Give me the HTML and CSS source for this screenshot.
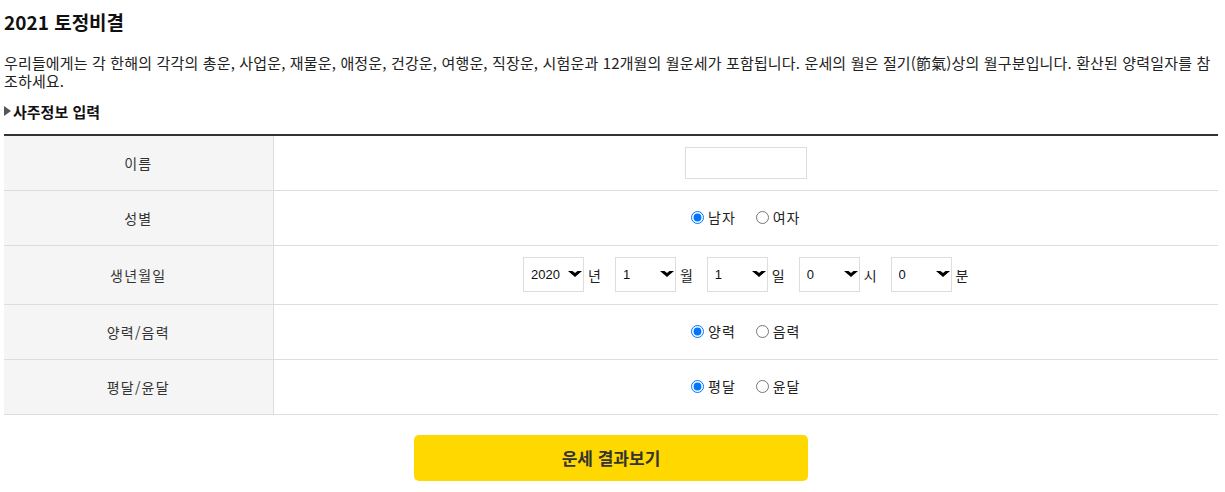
FILE: index.html
```html
<!DOCTYPE html>
<html lang="ko">
<head>
<meta charset="utf-8">
<title>2021 토정비결</title>
<link rel="stylesheet" href="styles.css">
</head>
<body>
<div class="page">
  <h1 class="title">2021 토정비결</h1>
  <p class="desc">우리들에게는 각 한해의 각각의 총운, 사업운, 재물운, 애정운, 건강운, 여행운, 직장운, 시험운과 12개월의 월운세가 포함됩니다. 운세의 월은 절기(節氣)상의 월구분입니다. 환산된 양력일자를 참조하세요.</p>
  <h2 class="sub"><span class="tri"></span>사주정보 입력</h2>
  <table class="form">
    <tr>
      <th>이름</th>
      <td><input type="text" class="name"></td>
    </tr>
    <tr>
      <th>성별</th>
      <td>
        <label class="opt"><input type="radio" name="sex" checked>남자</label>
        <label class="opt"><input type="radio" name="sex">여자</label>
      </td>
    </tr>
    <tr class="date-row">
      <th>생년월일</th>
      <td>
        <div class="dates">
          <span class="sel"><select><option>2020</option></select><svg class="arr" width="14" height="6" viewBox="0 0 14 6"><path d="M0 0H4.5L7 2L9.5 0H14L7 6Z" fill="#000"/></svg></span><span class="unit">년</span>
          <span class="sel"><select><option>1</option></select><svg class="arr" width="14" height="6" viewBox="0 0 14 6"><path d="M0 0H4.5L7 2L9.5 0H14L7 6Z" fill="#000"/></svg></span><span class="unit">월</span>
          <span class="sel"><select><option>1</option></select><svg class="arr" width="14" height="6" viewBox="0 0 14 6"><path d="M0 0H4.5L7 2L9.5 0H14L7 6Z" fill="#000"/></svg></span><span class="unit">일</span>
          <span class="sel"><select><option>0</option></select><svg class="arr" width="14" height="6" viewBox="0 0 14 6"><path d="M0 0H4.5L7 2L9.5 0H14L7 6Z" fill="#000"/></svg></span><span class="unit">시</span>
          <span class="sel"><select><option>0</option></select><svg class="arr" width="14" height="6" viewBox="0 0 14 6"><path d="M0 0H4.5L7 2L9.5 0H14L7 6Z" fill="#000"/></svg></span><span class="unit">분</span>
        </div>
      </td>
    </tr>
    <tr>
      <th>양력/음력</th>
      <td>
        <label class="opt"><input type="radio" name="cal" checked>양력</label>
        <label class="opt"><input type="radio" name="cal">음력</label>
      </td>
    </tr>
    <tr>
      <th>평달/윤달</th>
      <td>
        <label class="opt"><input type="radio" name="leap" checked>평달</label>
        <label class="opt"><input type="radio" name="leap">윤달</label>
      </td>
    </tr>
  </table>
  <div class="actions">
    <button type="button" class="submit">운세 결과보기</button>
  </div>
</div>
</body>
</html>
```
FILE: styles.css
```css
* { box-sizing: border-box; }
html, body { margin: 0; padding: 0; background: #fff; }
body {
  font-family: "Noto Sans CJK KR", "Noto Sans", sans-serif;
  color: #111;
}
.page {
  width: 1222px;
  padding: 0 4px;
}
.title {
  margin: 0;
  padding-top: 9px;
  font-size: 19px;
  font-weight: bold;
  line-height: 26px;
  color: #111;
}
.desc {
  margin: 19px 0 0;
  font-size: 15px;
  line-height: 18px;
  letter-spacing: 0.15px;
  color: #222;
}
.sub {
  margin: 12px 0 0;
  font-size: 15px;
  font-weight: bold;
  line-height: 20px;
  display: flex;
  align-items: center;
  color: #111;
}
.tri {
  width: 0; height: 0;
  border-left: 7px solid #555;
  border-top: 5px solid transparent;
  border-bottom: 5px solid transparent;
  margin-right: 2px;
  margin-top: -3px;
}
.form {
  margin-top: 12px;
  width: 1214px;
  border-collapse: collapse;
  border-top: 2px solid #333;
  font-size: 14px;
}
.form th {
  width: 269px;
  background: #f5f5f5;
  font-weight: normal;
  color: #333;
  letter-spacing: 1.2px;
  border-right: 1px solid #ddd;
  border-bottom: 1px solid #ddd;
  height: 55px;
  padding: 0;
}
.form td {
  border-bottom: 1px solid #ddd;
  height: 55px;
  padding: 0;
  text-align: center;
  color: #222;
}
.date-row th, .date-row td { height: 59px; }
.name {
  width: 122px;
  height: 32px;
  border: 1px solid #ddd;
  margin: 0;
  vertical-align: middle;
}
.opt {
  display: inline-flex;
  align-items: center;
  margin: 0 8px;
  font-size: 14px;
  letter-spacing: 1px;
}
.opt input {
  margin: 0 4px 0 0;
  width: 13px;
  height: 13px;
}
.dates {
  display: flex;
  justify-content: center;
  align-items: center;
}
.sel {
  position: relative;
  display: inline-block;
  width: 61px;
  height: 35px;
}
.sel select {
  appearance: none;
  -webkit-appearance: none;
  width: 61px;
  height: 35px;
  border: 1px solid #ddd;
  background: #fff;
  font-family: "Liberation Sans", Arial, sans-serif;
  font-size: 13px;
  color: #111;
  padding: 0 0 0 7px;
  border-radius: 0;
}
.arr {
  position: absolute;
  right: 2px;
  top: 14px;
  pointer-events: none;
}
.unit {
  margin: 0 14px 0 4px;
  font-size: 14px;
}
.unit:last-child { margin-right: 0; }
.actions {
  display: flex;
  justify-content: center;
  margin-top: 20px;
}
.submit {
  width: 394px;
  height: 46px;
  border: 0;
  border-radius: 5px;
  background: #ffd800;
  color: #333;
  font-family: "Noto Sans CJK KR", sans-serif;
  font-size: 17px;
  font-weight: bold;
}
```
